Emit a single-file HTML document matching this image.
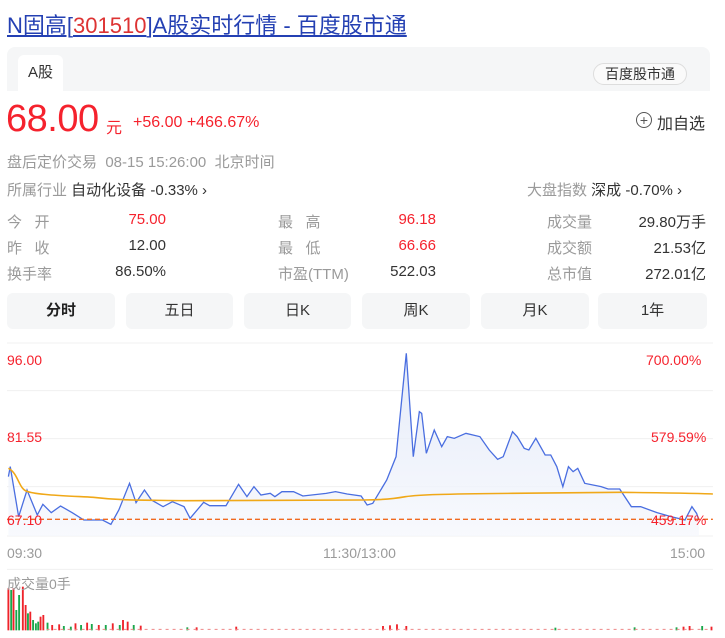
<!DOCTYPE html>
<html><head><meta charset="utf-8"><style>
body{margin:0;width:725px;height:638px;background:#fff;font-family:"Liberation Sans","Noto Sans CJK SC",sans-serif;position:relative;overflow:hidden;color:#333}
.a{position:absolute;white-space:nowrap}
.g{color:#9a9a9a}.r{color:#f5222d}
.v{position:absolute;white-space:nowrap;text-align:right;width:100px;font-size:15px}
.btn{position:absolute;top:293px;height:36px;background:#f5f6f7;border-radius:6px;text-align:center;line-height:36px;font-size:15px;color:#333}
</style></head><body>
<div class="a" style="left:7px;top:8px;font-size:22px;color:#2440b3;text-decoration:underline">N固高[<span style="color:#d33">301510</span>]A股实时行情 - 百度股市通</div>
<div class="a" style="left:7px;top:47px;width:703px;height:44px;background:#f5f6f7;border-radius:8px 8px 0 0"></div>
<div class="a" style="left:18px;top:55px;width:45px;height:36px;background:#fff;border-radius:6px 6px 0 0;font-size:15px;line-height:36px;text-align:center">A股</div>
<div class="a" style="left:593px;top:63px;width:92px;height:20px;border:1px solid #ddd;border-radius:11px;background:#fafafa;font-size:14px;line-height:20px;text-align:center">百度股市通</div>
<div class="a r" style="left:6px;top:98px;font-size:38px;letter-spacing:-0.5px">68.00</div>
<div class="a r" style="left:106px;top:114px;font-size:16px">元</div>
<div class="a r" style="left:133px;top:114px;font-size:16px">+56.00 +466.67%</div>
<div class="a" style="left:636px;top:112px;width:14px;height:14px;border:1.5px solid #555;border-radius:50%;font-size:14px;line-height:14px;text-align:center;color:#555">+</div>
<div class="a" style="left:657px;top:110px;font-size:16px">加自选</div>
<div class="a g" style="left:7px;top:151px;font-size:15px">盘后定价交易&nbsp; 08-15 15:26:00&nbsp; 北京时间</div>
<div class="a" style="left:7px;top:179px;font-size:15px"><span class="g">所属行业</span> 自动化设备 -0.33% ›</div>
<div class="a" style="left:527px;top:179px;font-size:15px"><span class="g">大盘指数</span> 深成 -0.70% ›</div>
<div class="a g" style="left:7px;top:211px;font-size:15px">今&nbsp;&nbsp; 开</div><div class="v r" style="left:66px;top:211px">75.00</div>
<div class="a g" style="left:7px;top:237px;font-size:15px">昨&nbsp;&nbsp; 收</div><div class="v" style="left:66px;top:237px">12.00</div>
<div class="a g" style="left:7px;top:263px;font-size:15px">换手率</div><div class="v" style="left:66px;top:263px">86.50%</div>
<div class="a g" style="left:278px;top:211px;font-size:15px">最&nbsp;&nbsp; 高</div><div class="v r" style="left:336px;top:211px">96.18</div>
<div class="a g" style="left:278px;top:237px;font-size:15px">最&nbsp;&nbsp; 低</div><div class="v r" style="left:336px;top:237px">66.66</div>
<div class="a g" style="left:278px;top:263px;font-size:15px">市盈(TTM)</div><div class="v" style="left:336px;top:263px">522.03</div>
<div class="a g" style="left:547px;top:211px;font-size:15px">成交量</div><div class="v" style="left:606px;top:211px">29.80万手</div>
<div class="a g" style="left:547px;top:237px;font-size:15px">成交额</div><div class="v" style="left:606px;top:237px">21.53亿</div>
<div class="a g" style="left:547px;top:263px;font-size:15px">总市值</div><div class="v" style="left:606px;top:263px">272.01亿</div>
<div class="btn" style="left:7px;width:108px;font-weight:bold;color:#222">分时</div>
<div class="btn" style="left:126px;width:107px">五日</div>
<div class="btn" style="left:244px;width:107px">日K</div>
<div class="btn" style="left:362px;width:108px">周K</div>
<div class="btn" style="left:481px;width:108px">月K</div>
<div class="btn" style="left:598px;width:109px">1年</div>
<svg class="a" style="left:0;top:340px" width="725" height="298" viewBox="0 0 1556 894" preserveAspectRatio="none">
<g stroke="#f0f0f0" stroke-width="1">
<line x1="15" y1="9" x2="1530" y2="9" vector-effect="non-scaling-stroke"/><line x1="15" y1="152" x2="1530" y2="152" vector-effect="non-scaling-stroke"/><line x1="15" y1="296" x2="1530" y2="296" vector-effect="non-scaling-stroke"/><line x1="15" y1="440" x2="1530" y2="440" vector-effect="non-scaling-stroke"/><line x1="15" y1="588" x2="1530" y2="588" vector-effect="non-scaling-stroke"/><line x1="15" y1="688" x2="1530" y2="688" vector-effect="non-scaling-stroke"/>
</g>
<defs><linearGradient id="f" x1="0" y1="0" x2="0" y2="1"><stop offset="0" stop-color="#dfe6f7"/><stop offset="1" stop-color="#f6f8fd"/></linearGradient></defs>
<path d="M18,410 L22,380 40,530 58,450 80,525 92,493 110,518 130,498 155,518 180,540 220,540 238,553 255,510 278,430 292,488 310,450 325,480 350,500 370,485 395,500 408,535 437,487 450,497 485,497 512,433 530,470 545,440 560,465 580,460 590,470 605,455 630,455 650,468 700,460 720,455 745,462 775,468 788,495 800,490 830,420 850,350 872,40 887,350 900,215 905,220 915,340 932,270 948,320 960,290 975,295 1000,280 1030,290 1050,330 1068,358 1080,350 1100,275 1110,290 1125,325 1135,330 1150,295 1170,345 1182,345 1195,380 1208,440 1220,380 1230,395 1240,385 1255,430 1290,440 1305,447 1330,447 1355,500 1375,500 1410,518 1440,530 1470,540 1485,500 1495,520 1500,540 L1500,588 18,588Z" fill="url(#f)" opacity="0.8"/>
<path d="M18,410 L22,380 40,530 58,450 80,525 92,493 110,518 130,498 155,518 180,540 220,540 238,553 255,510 278,430 292,488 310,450 325,480 350,500 370,485 395,500 408,535 437,487 450,497 485,497 512,433 530,470 545,440 560,465 580,460 590,470 605,455 630,455 650,468 700,460 720,455 745,462 775,468 788,495 800,490 830,420 850,350 872,40 887,350 900,215 905,220 915,340 932,270 948,320 960,290 975,295 1000,280 1030,290 1050,330 1068,358 1080,350 1100,275 1110,290 1125,325 1135,330 1150,295 1170,345 1182,345 1195,380 1208,440 1220,380 1230,395 1240,385 1255,430 1290,440 1305,447 1330,447 1355,500 1375,500 1410,518 1440,530 1470,540 1485,500 1495,520 1500,540" fill="none" stroke="#4a6ee0" stroke-width="1.3" vector-effect="non-scaling-stroke"/>
<path d="M18,385 C40,400 40,450 60,455 C80,465 150,468 200,472 C260,482 300,480 400,482 L780,480 C820,480 850,475 870,470 C900,464 950,462 1100,460 L1330,457 C1400,458 1500,460 1530,462" fill="none" stroke="#f0a818" stroke-width="1.6" vector-effect="non-scaling-stroke"/>
<line x1="15" y1="538" x2="1530" y2="538" stroke="#f06a20" stroke-width="1.3" stroke-dasharray="5,3" vector-effect="non-scaling-stroke"/>
<g fill="#ef232a"><rect x="16" y="745" width="4" height="126"/><rect x="27" y="745" width="4" height="126"/><rect x="47" y="740" width="4" height="131"/><rect x="53" y="795" width="4" height="76"/><rect x="63" y="815" width="4" height="56"/><rect x="85" y="830" width="4" height="41"/><rect x="91" y="825" width="4" height="46"/><rect x="110" y="855" width="4" height="16"/><rect x="125" y="853" width="4" height="18"/><rect x="160" y="850" width="4" height="21"/><rect x="185" y="848" width="4" height="23"/><rect x="210" y="855" width="4" height="16"/><rect x="240" y="850" width="4" height="21"/><rect x="262" y="840" width="4" height="31"/><rect x="272" y="845" width="4" height="26"/><rect x="300" y="857" width="4" height="14"/><rect x="420" y="862" width="4" height="9"/><rect x="505" y="860" width="4" height="11"/><rect x="820" y="858" width="4" height="13"/><rect x="835" y="856" width="4" height="15"/><rect x="850" y="853" width="4" height="18"/><rect x="870" y="858" width="4" height="13"/><rect x="1465" y="860" width="4" height="11"/><rect x="1478" y="858" width="4" height="13"/><rect x="1525" y="860" width="4" height="11"/></g>
<g fill="#19a74b"><rect x="22" y="750" width="4" height="121"/><rect x="33" y="810" width="4" height="61"/><rect x="39" y="765" width="4" height="106"/><rect x="58" y="820" width="4" height="51"/><rect x="69" y="840" width="4" height="31"/><rect x="75" y="850" width="4" height="21"/><rect x="80" y="845" width="4" height="26"/><rect x="100" y="848" width="4" height="23"/><rect x="135" y="858" width="4" height="13"/><rect x="150" y="860" width="4" height="11"/><rect x="172" y="855" width="4" height="16"/><rect x="195" y="852" width="4" height="19"/><rect x="225" y="855" width="4" height="16"/><rect x="255" y="855" width="4" height="16"/><rect x="285" y="855" width="4" height="16"/><rect x="400" y="862" width="4" height="9"/><rect x="1190" y="863" width="4" height="8"/><rect x="1360" y="862" width="4" height="9"/><rect x="1450" y="862" width="4" height="9"/><rect x="1505" y="858" width="4" height="13"/></g>
<path d="M100,868 L1520,868" stroke="#e88" stroke-width="1" stroke-dasharray="3,4" vector-effect="non-scaling-stroke"/>
</svg>
<div class="a r" style="left:7px;top:352px;font-size:14px">96.00</div>
<div class="a r" style="left:7px;top:429px;font-size:14px">81.55</div>
<div class="a r" style="left:7px;top:512px;font-size:14px">67.10</div>
<div class="a r" style="left:646px;top:352px;font-size:14px">700.00%</div>
<div class="a r" style="left:651px;top:429px;font-size:14px">579.59%</div>
<div class="a r" style="left:651px;top:512px;font-size:14px">459.17%</div>
<div class="a g" style="left:7px;top:545px;font-size:14px">09:30</div>
<div class="a g" style="left:323px;top:545px;font-size:14px">11:30/13:00</div>
<div class="a g" style="left:670px;top:545px;font-size:14px">15:00</div>
<div class="a g" style="left:7px;top:574px;font-size:14px">成交量0手</div>
</body></html>
